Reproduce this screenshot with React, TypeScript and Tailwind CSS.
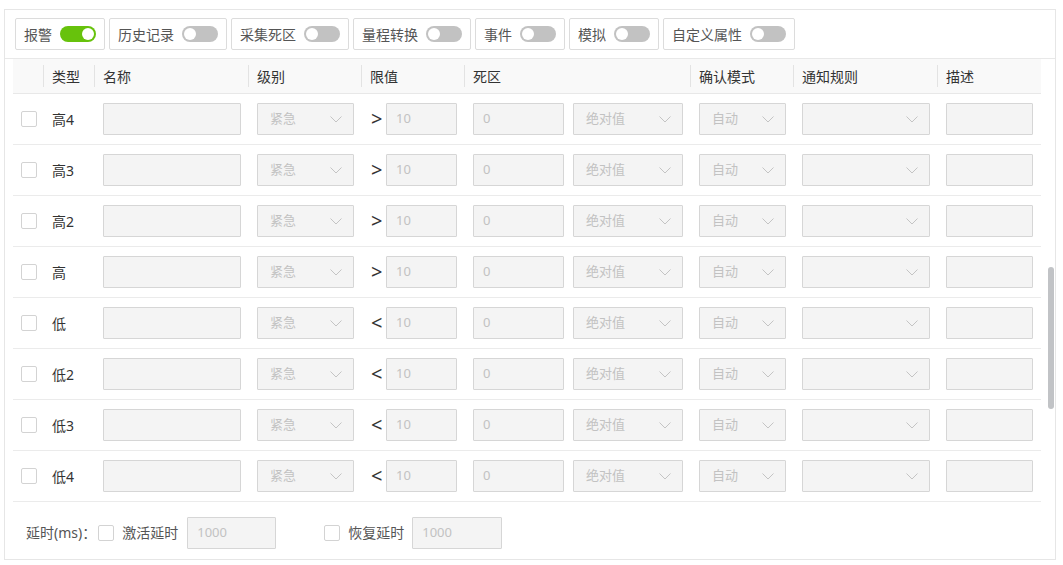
import { useState } from "react";

const FONT = "font-['Noto_Sans','Noto_Sans_CJK_SC',sans-serif]";

const SWITCHES = [
  { label: "报警", on: true },
  { label: "历史记录", on: false },
  { label: "采集死区", on: false },
  { label: "量程转换", on: false },
  { label: "事件", on: false },
  { label: "模拟", on: false },
  { label: "自定义属性", on: false },
];

const HEADERS = ["类型", "名称", "级别", "限值", "死区", "确认模式", "通知规则", "描述"];

const LEVELS = [
  { type: "高4", op: ">" },
  { type: "高3", op: ">" },
  { type: "高2", op: ">" },
  { type: "高", op: ">" },
  { type: "低", op: "<" },
  { type: "低2", op: "<" },
  { type: "低3", op: "<" },
  { type: "低4", op: "<" },
];

const GRID = "grid grid-cols-[30px_51px_154px_113px_103px_226px_103px_144px_104px]";

function Toggle({ on }: { on: boolean }) {
  return (
    <span
      className={`relative inline-flex h-[16px] w-[36px] shrink-0 items-center rounded-full ${
        on ? "justify-end bg-[#67c20c]" : "justify-start bg-[#c2c2c2]"
      } px-[2px]`}
    >
      <span className="h-[12px] w-[12px] rounded-full bg-white" />
    </span>
  );
}

function SwitchButton({ label, on }: { label: string; on: boolean }) {
  const [checked, setChecked] = useState(on);
  return (
    <button
      type="button"
      onClick={() => setChecked(!checked)}
      className="flex h-[32px] items-center gap-[8px] rounded-[2px] border border-[#dcdcdc] bg-white pr-[8px] pl-[8px] text-[14px] text-[#555]"
    >
      <span>{label}</span>
      <Toggle on={checked} />
    </button>
  );
}

function Checkbox() {
  return <span className="block h-[16px] w-[16px] shrink-0 rounded-[2px] border border-[#d3d3d3] bg-white" />;
}

function Chevron() {
  return (
    <svg width="12" height="7" viewBox="0 0 12 7" fill="none" className="shrink-0">
      <polyline points="0.5,0.5 6,6 11.5,0.5" stroke="#c4c4c4" strokeWidth="1" />
    </svg>
  );
}

function Field({ width, value }: { width: string; value?: string }) {
  return (
    <div
      className={`flex h-[32px] ${width} items-center rounded-[1px] border border-[#d6d6d6] bg-[#f4f4f4] pl-[9px] text-[13px] text-[#c2c2c2]`}
    >
      {value}
    </div>
  );
}

function Select({ width, value }: { width: string; value?: string }) {
  return (
    <div
      className={`flex h-[32px] ${width} items-center justify-between rounded-[1px] border border-[#d6d6d6] bg-[#f4f4f4] pr-[11px] pl-[12px] text-[13px] text-[#c2c2c2]`}
    >
      <span>{value}</span>
      <Chevron />
    </div>
  );
}

function LevelRow({ type, op }: { type: string; op: string }) {
  return (
    <div className={`${GRID} h-[51px] items-center border-b border-[#ebebeb]`}>
      <div className="pl-[8px]">
        <Checkbox />
      </div>
      <div className="pl-[9px] text-[14px] text-[#333]">{type}</div>
      <div className="pl-[9px]">
        <Field width="w-[138px]" />
      </div>
      <div className="pl-[9px]">
        <Select width="w-[97px]" value="紧急" />
      </div>
      <div className="flex items-center pl-[10px]">
        <span className="w-[15px] text-[20px] leading-none text-[#333]">{op}</span>
        <Field width="w-[71px]" value="10" />
      </div>
      <div className="flex items-center gap-[9px] pl-[9px]">
        <Field width="w-[91px]" value="0" />
        <Select width="w-[110px]" value="绝对值" />
      </div>
      <div className="pl-[9px]">
        <Select width="w-[87px]" value="自动" />
      </div>
      <div className="pl-[9px]">
        <Select width="w-[128px]" />
      </div>
      <div className="pl-[9px]">
        <Field width="w-[87px]" />
      </div>
    </div>
  );
}

export default function App() {
  return (
    <div className={`${FONT} h-[565px] w-[1063px] bg-white pt-[9px] pl-[4px]`}>
      <div className="flex h-[551px] w-[1052px] flex-col border border-[#e6e6e6]">
        {/* switches */}
        <div className="flex gap-[4px] border-b border-[#e8e8e8] px-[10px] pt-[8px] pb-[8px]">
          {SWITCHES.map((s) => (
            <SwitchButton key={s.label} label={s.label} on={s.on} />
          ))}
        </div>

        {/* alarm levels table */}
        <div className="flex h-[443px] pl-[8px]">
          <div className="w-[1028px]">
            <div className={`${GRID} h-[35px] items-center border-b border-[#e8e8e8] bg-[#f9f9f9]`}>
              <div />
              {HEADERS.map((h) => (
                <div key={h} className="flex items-center gap-[8px] text-[14px] text-[#333]">
                  <span className="h-[22px] w-px bg-[#e3e3e3]" />
                  <span>{h}</span>
                </div>
              ))}
            </div>
            {LEVELS.map((l) => (
              <LevelRow key={l.type} type={l.type} op={l.op} />
            ))}
          </div>
          <div className="w-[14px]">
            <div className="mt-[208px] ml-[7px] h-[142px] w-[6px] rounded-full bg-[#c1c3c6]" />
          </div>
        </div>

        {/* delay settings */}
        <div className="flex flex-1 items-center pt-[4px] pl-[21px] text-[14px] text-[#555]">
          <span>延时(ms)：</span>
          <span className="ml-[2px]">
            <Checkbox />
          </span>
          <span className="ml-[8px]">激活延时</span>
          <span className="ml-[9px]">
            <Field width="w-[89px]" value="1000" />
          </span>
          <span className="ml-[48px]">
            <Checkbox />
          </span>
          <span className="ml-[8px]">恢复延时</span>
          <span className="ml-[8px]">
            <Field width="w-[90px]" value="1000" />
          </span>
        </div>
      </div>
    </div>
  );
}
